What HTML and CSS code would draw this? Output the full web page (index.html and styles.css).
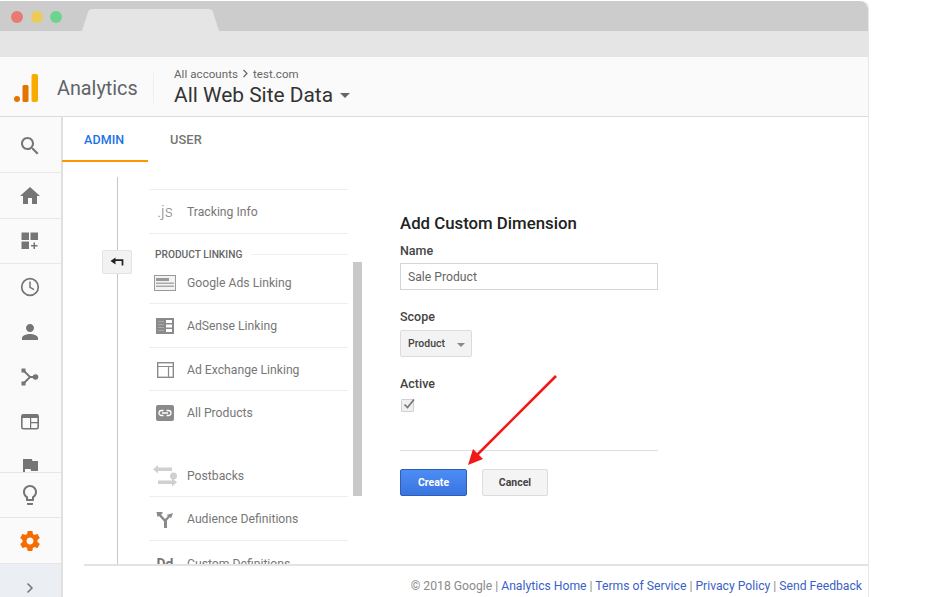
FILE: index.html
```html
<!DOCTYPE html>
<html lang="en">
<head>
<meta charset="utf-8">
<title>Analytics</title>
<link rel="stylesheet" href="styles.css">
</head>
<body>
<div class="window">
  <div class="tabbar">
    <span class="dot dot-red"></span><span class="dot dot-yellow"></span><span class="dot dot-green"></span>
    <svg class="browser-tab" width="138" height="22" viewBox="0 0 138 22"><path d="M0 22 L6 3 Q7 0 10 0 H127 Q130 0 131 3 L137 22 Z" fill="#e5e5e5"/></svg>
  </div>
  <div class="toolbar"></div>
  <header class="header">
    <svg class="logo" width="24" height="28" viewBox="0 0 24 28"><circle cx="3" cy="25" r="3" fill="#e37400"/><rect x="8.5" y="11" width="6" height="17" rx="1.5" fill="#e37400"/><rect x="17.5" y="0" width="6.5" height="28" rx="2" fill="#f9ab00"/></svg>
    <span class="brand">Analytics</span>
    <span class="divider"></span>
    <div class="account">
      <div class="crumbs">All accounts <svg class="crumb-sep" width="7" height="9" viewBox="0 0 7 9"><path d="M1.5 1 L5 4.5 L1.5 8" fill="none" stroke="#666" stroke-width="1.2"/></svg> test.com</div>
      <div class="view">All Web Site Data<span class="caret"></span></div>
    </div>
  </header>
  <div class="main">
    <aside class="sidebar">
      <div class="side-scroll">
        <div class="side-row side-search line"><svg width="24" height="24" viewBox="0 0 24 24"><path fill="#757575" d="M15.5 14h-.79l-.28-.27C15.41 12.59 16 11.11 16 9.5 16 5.91 13.09 3 9.5 3S3 5.91 3 9.5 5.91 16 9.5 16c1.61 0 3.09-.59 4.23-1.57l.27.28v.79l5 4.99L20.49 19l-4.99-5zm-6 0C7.01 14 5 11.99 5 9.5S7.01 5 9.5 5 14 7.01 14 9.5 11.99 14 9.5 14z"/></svg></div>
        <div class="side-row side-home line"><svg width="24" height="24" viewBox="0 0 24 24"><path fill="#757575" d="M10 20v-6h4v6h5v-8h3L12 3 2 12h3v8z"/></svg></div>
        <div class="side-row line"><svg width="20" height="20" viewBox="0 0 20 20"><path fill="#757575" d="M1.500 1.500h7.500v7.500h-7.500zM10.500 1.500h7.500v7.500h-7.500zM1.500 10.500h7.500v7.500h-7.500zM13.500 11.500h1.500v2.500h2.500v1.500h-2.500v2.500h-1.500v-2.500h-2.500v-1.500h2.500z"/></svg></div>
        <div class="side-row"><svg width="24" height="24" viewBox="0 0 24 24"><circle cx="12" cy="12" r="8.300" fill="none" stroke="#757575" stroke-width="1.700"/><path d="M12 6.500V12.300L16 14.700" fill="none" stroke="#757575" stroke-width="1.500"/></svg></div>
        <div class="side-row"><svg width="24" height="24" viewBox="0 0 24 24"><path fill="#757575" d="M12 12c2.210 0 4-1.790 4-4s-1.790-4-4-4-4 1.790-4 4 1.790 4 4 4zm0 2c-2.670 0-8 1.340-8 4v2h16v-2c0-2.660-5.330-4-8-4z"/></svg></div>
        <div class="side-row"><svg width="20" height="20" viewBox="0 0 20 20"><path d="M3.500 3.500L10 10H16M3.500 16.500L10 10" fill="none" stroke="#757575" stroke-width="1.800"/><rect x="1.500" y="1.500" width="4" height="4" fill="#757575"/><rect x="1.500" y="14.500" width="4" height="4" fill="#757575"/><circle cx="15.500" cy="10" r="2.800" fill="#757575"/></svg></div>
        <div class="side-row"><svg width="20" height="20" viewBox="0 0 20 20"><rect x="1.800" y="2.800" width="16.400" height="14" rx="1.500" fill="none" stroke="#757575" stroke-width="1.600"/><path fill="#757575" d="M2 3h16v3H2zM10 10h8v1.200h-8zM10 6h1.200v11H10z"/></svg></div>
        <div class="side-row"><svg width="24" height="24" viewBox="0 0 24 24"><path fill="#757575" d="M14.400 6L14 4H5v17h2v-7h5.600l.4 2h7V6z"/></svg></div>
      </div>
      <div class="side-row side-bulb"><svg width="24" height="24" viewBox="0 0 24 24"><path fill="#757575" d="M9 21c0 .550.450 1 1 1h4c.550 0 1-.450 1-1v-1H9v1zm3-19C8.140 2 5 5.140 5 9c0 2.380 1.190 4.470 3 5.740V17c0 .550.450 1 1 1h6c.550 0 1-.450 1-1v-2.260c1.810-1.270 3-3.360 3-5.740 0-3.860-3.140-7-7-7zm2.850 11.100l-.850.600V16h-4v-2.300l-.850-.600C7.800 12.160 7 10.630 7 9c0-2.760 2.240-5 5-5s5 2.240 5 5c0 1.630-.800 3.160-2.150 4.100z"/></svg></div>
      <div class="side-row side-gear"><svg width="24" height="24" viewBox="0 0 24 24"><path fill="#f76b00" d="M19.430 12.980c.040-.320.070-.640.070-.980s-.030-.660-.070-.980l2.110-1.650c.190-.150.240-.420.120-.640l-2-3.460c-.120-.220-.390-.300-.610-.220l-2.490 1c-.520-.400-1.080-.730-1.690-.980l-.380-2.650C14.460 2.180 14.250 2 14 2h-4c-.250 0-.460.180-.490.420l-.380 2.650c-.610.250-1.170.590-1.690.980l-2.490-1c-.230-.090-.490 0-.610.220l-2 3.460c-.130.220-.070.490.120.640l2.110 1.650c-.040.320-.070.650-.070.980s.030.660.070.980l-2.110 1.650c-.190.150-.240.420-.120.640l2 3.460c.120.220.390.300.610.220l2.490-1c.520.400 1.080.730 1.690.980l.380 2.650c.030.240.240.420.490.420h4c.250 0 .460-.180.490-.420l.380-2.650c.610-.250 1.170-.590 1.690-.980l2.490 1c.230.090.490 0 .610-.220l2-3.460c.120-.220.070-.490-.120-.640l-2.110-1.650zM12 15.500c-1.930 0-3.500-1.570-3.500-3.500s1.570-3.500 3.500-3.500 3.500 1.570 3.500 3.500-1.570 3.500-3.500 3.500z"/></svg></div>
      <div class="side-expand"><svg width="10" height="12" viewBox="0 0 10 12"><path d="M2.500 1.500L7 6L2.500 10.500" fill="none" stroke="#757575" stroke-width="1.500"/></svg></div>
    </aside>
    <div class="content">
      <nav class="tabs">
        <a class="tab tab-active">ADMIN</a>
        <a class="tab tab-user">USER</a>
      </nav>
      <div class="panel">
        <div class="rail"></div>
        <button class="collapse" type="button"><svg width="14" height="10" viewBox="0 0 14 10"><path d="M5.500 0.500V7.500L0.500 4z" fill="#222"/><path d="M5 3.200H12.500V8.500" fill="none" stroke="#222" stroke-width="1.700"/></svg></button>
        <div class="nav-list">
          <div class="nav-item nav-tracking line-top line-bottom"><span class="nav-icon js">.js</span>Tracking Info</div>
          <div class="nav-head"><span>PRODUCT LINKING</span></div>
          <div class="nav-item nav-ads line-bottom"><span class="nav-icon"><svg width="22" height="16" viewBox="0 0 22 16"><rect x=".5" y=".5" width="21" height="15" fill="#f3f3f3" stroke="#9a9a9a"/><rect x="2" y="3" width="13" height="3" fill="#999"/><rect x="2" y="7.500" width="18" height="1.500" fill="#aaa"/><rect x="2" y="10.500" width="18" height="1.500" fill="#aaa"/></svg></span>Google Ads Linking</div>
          <div class="nav-item nav-sense line-bottom"><span class="nav-icon"><svg width="18" height="16" viewBox="0 0 18 16"><rect width="18" height="16" fill="#8a8a8a"/><path fill="#fff" d="M10 2h6v3h-6zM10 6.500h6v3h-6zM10 11h6v3h-6z"/><path fill="#aaa" d="M2 3h6v1H2zM2 6h6v1H2zM2 9h6v1H2zM2 12h6v1H2z"/></svg></span>AdSense Linking</div>
          <div class="nav-item nav-exchange line-bottom"><span class="nav-icon"><svg width="17" height="16" viewBox="0 0 17 16"><rect x=".7" y=".7" width="15.600" height="14.600" fill="none" stroke="#8a8a8a" stroke-width="1.400"/><path d="M1 4.500H16M11.500 4.500V15" fill="none" stroke="#8a8a8a" stroke-width="1.200"/></svg></span>Ad Exchange Linking</div>
          <div class="nav-item nav-products"><span class="nav-icon"><svg width="18" height="16" viewBox="0 0 18 16"><rect width="18" height="16" rx="2" fill="#8a8a8a"/><path d="M7.500 5.500H5.500a2.500 2.500 0 0 0 0 5h2M10.500 5.500h2a2.500 2.500 0 0 1 0 5h-2M6 8h6" fill="none" stroke="#fff" stroke-width="1.300"/></svg></span>All Products</div>
          <div class="nav-item nav-postbacks line-bottom"><span class="nav-icon"><svg width="24" height="22" viewBox="0 0 24 22"><path fill="#d0d0d0" d="M5 0v2.500h14V6H5v2.500L0 4.200zM19 13v2.500H5V19h14v2.500l5-4.200z" transform="translate(0 0)"/><circle cx="20.500" cy="11" r="3.500" fill="#d0d0d0"/></svg></span>Postbacks</div>
          <div class="nav-item nav-audience line-bottom"><span class="nav-icon"><svg width="18" height="17" viewBox="0 0 18 17"><path fill="#8a8a8a" d="M.5 1h6v1.500L5 3.500l4 4.500 3-3-1.500-1L17 2l-2 5.500-1-1.500-3 3.500V17H8v-6.500L3 5 1.500 6z"/></svg></span>Audience Definitions</div>
          <div class="nav-item nav-custom"><span class="nav-icon dd">Dd</span>Custom Definitions</div>
        </div>
        <div class="scrollbar"></div>
        <form class="form">
          <h2 class="form-title">Add Custom Dimension</h2>
          <label class="field-label label-name">Name</label>
          <div class="input">Sale Product</div>
          <label class="field-label label-scope">Scope</label>
          <div class="select">Product<span class="select-caret"></span></div>
          <label class="field-label label-active">Active</label>
          <div class="checkbox"><svg width="13" height="13" viewBox="0 0 13 13"><path d="M2.500 6.500L5.500 9.500L12 1.500" fill="none" stroke="#777" stroke-width="1.700"/></svg></div>
          <div class="form-rule"></div>
          <div class="actions">
            <button class="btn btn-primary" type="button">Create</button>
            <button class="btn btn-cancel" type="button">Cancel</button>
          </div>
        </form>
      </div>
      <footer class="footer">
        <span>© 2018 Google | <a>Analytics Home</a> | <a>Terms of Service</a> | <a>Privacy Policy</a> | <a>Send Feedback</a></span>
      </footer>
    </div>
  </div>
</div>
<svg class="arrow" width="100" height="100" viewBox="0 0 100 100"><path d="M89 1 L9 81" stroke="#f01818" stroke-width="2.600" fill="none"/><path d="M1 90 L6 74 L16 84 Z" fill="#f01818"/></svg>
</body>
</html>
```
FILE: styles.css
```css
* { box-sizing: border-box; }
html, body { margin: 0; padding: 0; height: 100%; background: #fff; overflow: hidden; }
body { font-family: Roboto, "Liberation Sans", sans-serif; position: relative; }

.window {
  width: 869px; height: 597px; display: flex; flex-direction: column;
  border-right: 1px solid #e6e6e6; border-top-right-radius: 8px; overflow: hidden; padding-top: 1px;
}

.tabbar { height: 30px; background: #cccccc; flex: none; display: flex; align-items: center; padding-left: 11px; position: relative; border-top-right-radius: 8px; }
.dot { width: 12px; height: 12px; border-radius: 50%; margin-right: 8px; margin-top: 1px; }
.dot-red { background: #e87a73; }
.dot-yellow { background: #eccb5a; margin-right: 7px; }
.dot-green { background: #6ed38f; margin-right: 0; }
.browser-tab { align-self: flex-end; margin-left: 20px; display: block; }

.toolbar { height: 26px; background: #e5e5e5; flex: none; }

.header { height: 60px; background: #fafafa; border-bottom: 1px solid #dcdce0; flex: none; display: flex; align-items: center; padding-left: 14px; }
.logo { display: block; flex: none; margin-top: 3px; }
.brand { font-size: 19.800px; color: #5f6368; margin-left: 19px; width: 81px; white-space: nowrap; margin-top: 4px; }
.divider { width: 1px; height: 30px; background: #eeeeee; margin-left: 15px; margin-top: 2px; }
.account { margin-left: 20px; margin-top: 3px; }
.crumbs { font-size: 11.500px; color: #666; line-height: 14px; white-space: nowrap; letter-spacing: .07px; }
.crumb-sep { margin: 0 1px; }
.view { font-size: 20.900px; color: #333; line-height: 29px; white-space: nowrap; display: flex; align-items: center; }
.caret { width: 0; height: 0; border-left: 5px solid transparent; border-right: 5px solid transparent; border-top: 5px solid #666; margin-left: 7px; margin-top: 1px; }

.main { flex: 1; display: flex; min-height: 0; }

.sidebar { width: 63px; flex: none; background: #fafafa; border-right: 2px solid #e0e0e0; display: flex; flex-direction: column; }
.side-scroll { height: 356px; overflow: hidden; flex: none; border-bottom: 1px solid #e6e6e6; }
.side-row { height: 45px; display: flex; align-items: center; justify-content: center; flex: none; padding-right: 1px; }
.side-row svg { display: block; }
.side-search { height: 56px; padding-top: 3px; }
.side-home { height: 46px; padding-top: 1px; }
.line { border-bottom: 1px solid #e8e8e8; }
.side-bulb { height: 45px; border-bottom: 1px solid #e6e6e6; }
.side-gear { height: 46px; border-bottom: 1px solid #e6e6e6; }
.side-expand { flex: 1; background: #ebeff3; display: flex; align-items: center; justify-content: center; padding: 14px 1px 0 0; }

.content { flex: 1; min-width: 0; display: flex; flex-direction: column; background: #fff; }

.tabs { height: 45px; display: flex; flex: none; }
.tab { font-size: 12.500px; font-weight: 500; color: #757575; padding: 15px 22px 0 22px; letter-spacing: .1px; height: 45px; }
.tab-active { color: #1a73e8; border-bottom: 2px solid #ff9800; width: 86px; margin-left: -1px; }
.tab-user { font-size: 12.800px; padding-top: 15px; }

.panel { flex: 1; min-height: 0; display: flex; position: relative; overflow: hidden; padding-left: 54px; }
.rail { width: 1px; background: #c8c8c8; margin-top: 15px; flex: none; }
.collapse { position: absolute; left: 39px; top: 88px; width: 30px; height: 24px; padding: 0; background: #f2f2f2; border: 1px solid #e3e3e3; border-radius: 2px; display: flex; align-items: center; justify-content: center; }

.nav-list { width: 199px; margin-left: 31px; padding-top: 27px; flex: none; overflow: hidden; }
.nav-item { font-size: 12.200px; color: #777; display: flex; align-items: center; white-space: nowrap; }
.nav-icon { width: 38px; display: flex; justify-content: center; padding-right: 6px; flex: none; }
.nav-icon svg { display: block; }
.line-top { border-top: 1px solid #eeeeee; }
.line-bottom { border-bottom: 1px solid #eeeeee; }
.js { font-size: 16px; font-weight: 300; color: #888; }
.dd { font-size: 14px; font-weight: 700; color: #777; }
.nav-tracking { height: 45px; }
.nav-head { height: 29px; display: flex; align-items: flex-start; padding: 15px 0 0 6px; font-size: 10.200px; font-weight: 500; color: #666; position: relative; }
.nav-head span { white-space: nowrap; line-height: 12px; }
.nav-head::after { content: ""; flex: 1; height: 1px; background: #f0f0f0; margin: 5px 0 0 9px; }
.nav-ads { height: 41px; padding-bottom: 1px; }
.nav-sense { height: 44px; }
.nav-exchange { height: 43px; padding-top: 1px; }
.nav-products { height: 44px; }
.nav-postbacks { height: 62px; padding-top: 20px; }
.nav-audience { height: 44px; padding-top: 1px; }
.nav-custom { height: 44px; padding-top: 1px; }

.scrollbar { width: 9px; height: 234px; margin: 100px 0 0 5px; background: #c9c9c9; flex: none; }

.form { width: 258px; margin-left: 38px; flex: none; display: flex; flex-direction: column; }
.form-title { font-size: 16.800px; font-weight: 500; color: #222; line-height: 19px; margin: 52px 0 0; white-space: nowrap; }
.field-label { font-size: 12.500px; font-weight: 500; color: #444; line-height: 16px; display: block; }
.label-name { margin-top: 10px; }
.input { height: 27px; margin-top: 4px; border: 1px solid #d4d4d4; font-size: 12.200px; color: #666; padding: 0 7px; line-height: 27px; }
.label-scope { margin-top: 19px; }
.select { width: 72px; height: 27px; margin-top: 5px; background: #f3f3f3; border: 1px solid #dcdcdc; border-radius: 2px; font-size: 10.500px; font-weight: 500; color: #444; display: flex; align-items: center; padding-left: 7px; }
.select-caret { width: 0; height: 0; border-left: 4px solid transparent; border-right: 4px solid transparent; border-top: 4px solid #888; margin-left: 12px; margin-top: 2px; }
.label-active { margin-top: 19px; }
.checkbox { width: 13px; height: 13px; margin: 7px 0 0 1px; background: #f0f0f0; border: 1px solid #d0d0d0; border-radius: 1px; overflow: visible; }
.checkbox svg { display: block; margin: -2px 0 0 0; overflow: visible; }
.form-rule { height: 1px; background: #dedede; margin-top: 38px; flex: none; }
.actions { display: flex; gap: 15px; margin-top: 18px; }
.btn { height: 27px; border-radius: 2px; font-family: Roboto, "Liberation Sans", sans-serif; font-size: 10.500px; font-weight: 700; padding: 0 0 1px; }
.btn-primary { width: 67px; background: linear-gradient(#4c8df5, #3a74e0); border: 1px solid #2f5fb5; color: #fff; }
.btn-cancel { width: 66px; background: #f4f4f4; border: 1px solid #dcdcdc; color: #444; }

.footer { height: 33px; flex: none; margin-left: 21px; border-top: 2px solid #e3e3e3; display: flex; justify-content: flex-end; align-items: center; padding: 8px 6px 0 0; font-size: 12.180px; color: #8a8a8a; white-space: nowrap; }
.footer a { color: #3b5fc8; }

.arrow { position: absolute; left: 467px; top: 375px; display: block; }
```
